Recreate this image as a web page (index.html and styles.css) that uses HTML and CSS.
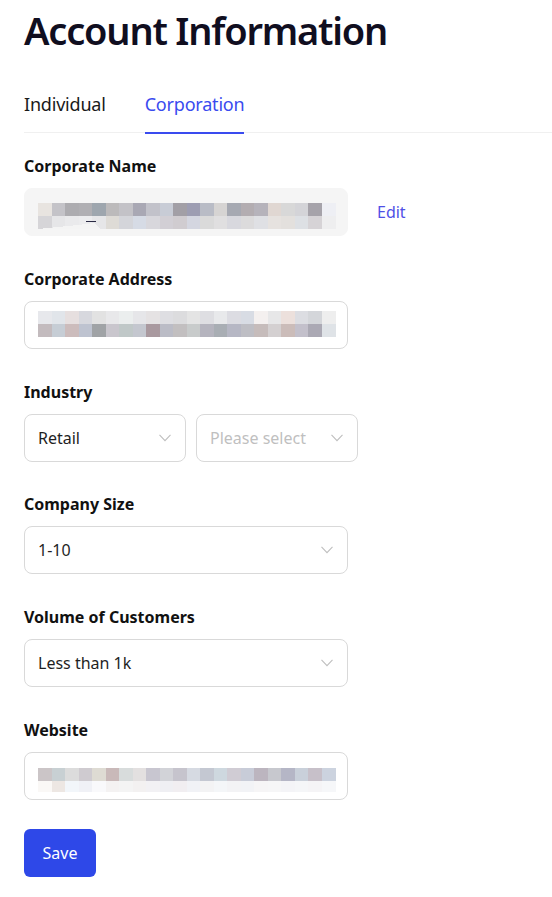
FILE: index.html
```html
<!DOCTYPE html>
<html lang="en">
<head>
<meta charset="utf-8">
<title>Account Information</title>
<link rel="stylesheet" href="styles.css">
</head>
<body>
<div class="page">
  <h1 class="title">Account Information</h1>
  <div class="tabs">
    <div class="tab">Individual</div>
    <div class="tab active">Corporation</div>
  </div>
  <form class="form">
    <div class="fields">
      <div class="field">
        <label class="label">Corporate Name</label>
        <div class="row">
          <div class="input disabled">
            <svg class="mosaic" width="300" height="46" viewBox="0 0 300 46" shape-rendering="crispEdges">
              <g transform="translate(0,14)">
                <rect x="0" width="14" height="13" fill="#e8e4e0"/><rect x="13.5" width="14" height="13" fill="#c4c3c8"/><rect x="27" width="14" height="13" fill="#adacb0"/><rect x="40.5" width="14" height="13" fill="#b0afb3"/><rect x="54" width="14" height="13" fill="#9ea6ae"/><rect x="67.5" width="14" height="13" fill="#bcbabb"/><rect x="81" width="14" height="13" fill="#c3c2c7"/><rect x="94.5" width="14" height="13" fill="#a9a8b4"/><rect x="108" width="14" height="13" fill="#c2c2ca"/><rect x="121.5" width="14" height="13" fill="#c8ccd6"/><rect x="135" width="14" height="13" fill="#a29fa6"/><rect x="148.5" width="14" height="13" fill="#9d9db2"/><rect x="162" width="14" height="13" fill="#b9bcc6"/><rect x="175.5" width="14" height="13" fill="#d6d4d3"/><rect x="189" width="14" height="13" fill="#a6a9b2"/><rect x="202.5" width="14" height="13" fill="#b3adb1"/><rect x="216" width="14" height="13" fill="#b6b3bb"/><rect x="229.5" width="14" height="13" fill="#e0d7d2"/><rect x="243" width="14" height="13" fill="#d8d8d8"/><rect x="256.5" width="14" height="13" fill="#d4d4d8"/><rect x="270" width="14" height="13" fill="#a6a3aa"/><rect x="283.5" width="14" height="13" fill="#eeeff4"/>
              </g>
              <g transform="translate(0,27)">
                <rect x="0" width="14" height="13" fill="#d6d5d8"/><rect x="13.5" width="14" height="13" fill="#e6e6e8"/><rect x="27" width="14" height="13" fill="#eaeaec"/><rect x="40.5" width="14" height="13" fill="#ececee"/><rect x="54" width="14" height="13" fill="#e6e6e8"/><rect x="67.5" width="14" height="13" fill="#dedbd6"/><rect x="81" width="14" height="13" fill="#d4d5da"/><rect x="94.5" width="14" height="13" fill="#d6dbe5"/><rect x="108" width="14" height="13" fill="#d8d7dc"/><rect x="121.5" width="14" height="13" fill="#d2cfd5"/><rect x="135" width="14" height="13" fill="#d0ccd0"/><rect x="148.5" width="14" height="13" fill="#d4d6e0"/><rect x="162" width="14" height="13" fill="#dadada"/><rect x="175.5" width="14" height="13" fill="#e0dfe0"/><rect x="189" width="14" height="13" fill="#d8d8de"/><rect x="202.5" width="14" height="13" fill="#dcdbdc"/><rect x="216" width="14" height="13" fill="#dfe0e4"/><rect x="229.5" width="14" height="13" fill="#e6e2df"/><rect x="243" width="14" height="13" fill="#e3e0dd"/><rect x="256.5" width="14" height="13" fill="#dde0e4"/><rect x="270" width="14" height="13" fill="#d6d3d6"/><rect x="283.5" width="14" height="13" fill="#eeeeef"/>
              </g>
              <path d="M0 40 L40 36 L56 34 L62 40 Z" fill="#f4f4f4"/>
              <path d="M48 33 L58 32" stroke="#2a2a44" stroke-width="1"/>
            </svg>
          </div>
          <a class="edit" href="#">Edit</a>
        </div>
      </div>

      <div class="field">
        <label class="label">Corporate Address</label>
        <div class="input">
          <svg class="mosaic" width="300" height="46" viewBox="0 0 300 46" shape-rendering="crispEdges">
            <g transform="translate(0,9)">
              <rect x="0" width="14" height="13" fill="#e7e8ec"/><rect x="13.5" width="14" height="13" fill="#e1e5ea"/><rect x="27" width="14" height="13" fill="#e6dfdf"/><rect x="40.5" width="14" height="13" fill="#d7d8de"/><rect x="54" width="14" height="13" fill="#e2e2e2"/><rect x="67.5" width="14" height="13" fill="#e8e8ea"/><rect x="81" width="14" height="13" fill="#ebeeee"/><rect x="94.5" width="14" height="13" fill="#e6e6e9"/><rect x="108" width="14" height="13" fill="#e5e2e3"/><rect x="121.5" width="14" height="13" fill="#dedee2"/><rect x="135" width="14" height="13" fill="#dcdcde"/><rect x="148.5" width="14" height="13" fill="#e4e4e4"/><rect x="162" width="14" height="13" fill="#dedee2"/><rect x="175.5" width="14" height="13" fill="#e8e9eb"/><rect x="189" width="14" height="13" fill="#dcdce2"/><rect x="202.5" width="14" height="13" fill="#d8dce4"/><rect x="216" width="14" height="13" fill="#f4f0ef"/><rect x="229.5" width="14" height="13" fill="#e7e7e8"/><rect x="243" width="14" height="13" fill="#ece0dc"/><rect x="256.5" width="14" height="13" fill="#dcdde2"/><rect x="270" width="14" height="13" fill="#d4d6da"/><rect x="283.5" width="14" height="13" fill="#eeeeee"/>
            </g>
            <g transform="translate(0,22)">
              <rect x="0" width="14" height="13" fill="#c3bbbe"/><rect x="13.5" width="14" height="13" fill="#c6cdd5"/><rect x="27" width="14" height="13" fill="#ccbcbc"/><rect x="40.5" width="14" height="13" fill="#bec3d0"/><rect x="54" width="14" height="13" fill="#a0a3a6"/><rect x="67.5" width="14" height="13" fill="#c9c6cd"/><rect x="81" width="14" height="13" fill="#c0c8c8"/><rect x="94.5" width="14" height="13" fill="#c4c7cf"/><rect x="108" width="14" height="13" fill="#a9999f"/><rect x="121.5" width="14" height="13" fill="#bbbcc6"/><rect x="135" width="14" height="13" fill="#c2bfc0"/><rect x="148.5" width="14" height="13" fill="#c8cbcb"/><rect x="162" width="14" height="13" fill="#b5b4be"/><rect x="175.5" width="14" height="13" fill="#a9aeb4"/><rect x="189" width="14" height="13" fill="#b6b7c4"/><rect x="202.5" width="14" height="13" fill="#bebec4"/><rect x="216" width="14" height="13" fill="#c6bcbb"/><rect x="229.5" width="14" height="13" fill="#d4d0d1"/><rect x="243" width="14" height="13" fill="#cbbcb9"/><rect x="256.5" width="14" height="13" fill="#c3c0cb"/><rect x="270" width="14" height="13" fill="#aba9b4"/><rect x="283.5" width="14" height="13" fill="#dfe3e7"/>
            </g>
          </svg>
        </div>
      </div>

      <div class="field">
        <label class="label">Industry</label>
        <div class="row pair">
          <div class="input select">
            <span>Retail</span>
            <svg class="chevron" width="12" height="8" viewBox="0 0 12 8"><path d="M0.5 0.8 L6 6.6 L11.5 0.8" fill="none" stroke="#bfbfbf" stroke-width="1.1"/></svg>
          </div>
          <div class="input select">
            <span class="placeholder">Please select</span>
            <svg class="chevron" width="12" height="8" viewBox="0 0 12 8"><path d="M0.5 0.8 L6 6.6 L11.5 0.8" fill="none" stroke="#bfbfbf" stroke-width="1.1"/></svg>
          </div>
        </div>
      </div>

      <div class="field">
        <label class="label">Company Size</label>
        <div class="input select">
          <span>1-10</span>
          <svg class="chevron" width="12" height="8" viewBox="0 0 12 8"><path d="M0.5 0.8 L6 6.6 L11.5 0.8" fill="none" stroke="#bfbfbf" stroke-width="1.1"/></svg>
        </div>
      </div>

      <div class="field">
        <label class="label">Volume of Customers</label>
        <div class="input select">
          <span>Less than 1k</span>
          <svg class="chevron" width="12" height="8" viewBox="0 0 12 8"><path d="M0.5 0.8 L6 6.6 L11.5 0.8" fill="none" stroke="#bfbfbf" stroke-width="1.1"/></svg>
        </div>
      </div>

      <div class="field">
        <label class="label">Website</label>
        <div class="input">
          <svg class="mosaic" width="300" height="46" viewBox="0 0 300 46" shape-rendering="crispEdges">
            <g transform="translate(0,15)">
              <rect x="0" width="14" height="13" fill="#cbc5c7"/><rect x="13.5" width="14" height="13" fill="#c8d0d3"/><rect x="27" width="14" height="13" fill="#dcdcdc"/><rect x="40.5" width="14" height="13" fill="#cfcbd0"/><rect x="54" width="14" height="13" fill="#dedbd3"/><rect x="67.5" width="14" height="13" fill="#c9b9b9"/><rect x="81" width="14" height="13" fill="#d8dcdc"/><rect x="94.5" width="14" height="13" fill="#e3e0e0"/><rect x="108" width="14" height="13" fill="#c8c6d0"/><rect x="121.5" width="14" height="13" fill="#d2d3d8"/><rect x="135" width="14" height="13" fill="#c6c4cd"/><rect x="148.5" width="14" height="13" fill="#d6dae2"/><rect x="162" width="14" height="13" fill="#c4c8d2"/><rect x="175.5" width="14" height="13" fill="#ced8df"/><rect x="189" width="14" height="13" fill="#d0ccd4"/><rect x="202.5" width="14" height="13" fill="#c8ccd8"/><rect x="216" width="14" height="13" fill="#bcb5bf"/><rect x="229.5" width="14" height="13" fill="#c7c8ce"/><rect x="243" width="14" height="13" fill="#b5b6c6"/><rect x="256.5" width="14" height="13" fill="#c9d0da"/><rect x="270" width="14" height="13" fill="#c7c0c9"/><rect x="283.5" width="14" height="13" fill="#ccd3df"/>
            </g>
            <g transform="translate(0,28)">
              <rect x="0" width="14" height="11" fill="#faf8f6"/><rect x="13.5" width="14" height="11" fill="#ede7e3"/><rect x="27" width="14" height="11" fill="#f2f6fa"/><rect x="40.5" width="14" height="11" fill="#f0f1f6"/><rect x="54" width="14" height="11" fill="#f9f9fb"/><rect x="67.5" width="14" height="11" fill="#f4f2f2"/><rect x="81" width="14" height="11" fill="#f4f4f4"/><rect x="94.5" width="14" height="11" fill="#f3f1f1"/><rect x="108" width="14" height="11" fill="#f2f1f4"/><rect x="121.5" width="14" height="11" fill="#efeff3"/><rect x="135" width="14" height="11" fill="#f1eef1"/><rect x="148.5" width="14" height="11" fill="#f1f2f6"/><rect x="162" width="14" height="11" fill="#f3f3f4"/><rect x="175.5" width="14" height="11" fill="#f4f6f8"/><rect x="189" width="14" height="11" fill="#f3f3f5"/><rect x="202.5" width="14" height="11" fill="#f2f3f6"/><rect x="216" width="14" height="11" fill="#f6f5f6"/><rect x="229.5" width="14" height="11" fill="#f6f6f7"/><rect x="243" width="14" height="11" fill="#f4f4f7"/><rect x="256.5" width="14" height="11" fill="#f5f6f8"/><rect x="270" width="14" height="11" fill="#f5f4f6"/><rect x="283.5" width="14" height="11" fill="#f6f7f9"/>
            </g>
          </svg>
        </div>
      </div>
    </div>
    <div class="actions">
      <button type="button" class="btn-primary">Save</button>
    </div>
  </form>
</div>
</body>
</html>
```

FILE: styles.css
```css
* {
  box-sizing: border-box;
}

body {
  margin: 0;
  background: #ffffff;
  font-family: "Noto Sans", "Segoe UI", "Liberation Sans", sans-serif;
  color: #1f1f1f;
}

.page {
  padding: 6px 0 0 24px;
}

.title {
  margin: 0;
  font-size: 38px;
  line-height: 48px;
  font-weight: 600;
  letter-spacing: -1.2px;
  color: #100e1f;
}

.tabs {
  display: flex;
  gap: 39px;
  margin-top: 23px;
  border-bottom: 1px solid #f0f0f0;
}

.tab {
  position: relative;
  padding: 13px 0 14px;
  font-size: 18px;
  line-height: 28px;
  letter-spacing: -0.2px;
  color: #1a1a1a;
}

.tab.active {
  color: #3a4bef;
}

.tab.active::after {
  content: "";
  position: absolute;
  left: 0;
  right: 0;
  bottom: -2px;
  height: 2px;
  background: #3a4bef;
}

.form {
  margin-top: 22px;
  display: flex;
  flex-direction: column;
}

.fields {
  display: flex;
  flex-direction: column;
  gap: 31.8px;
}

.field {
  display: flex;
  flex-direction: column;
}

.label {
  display: block;
  font-size: 16px;
  line-height: 22px;
  font-weight: 700;
  color: #111111;
  margin-bottom: 11px;
}

.row {
  display: flex;
  align-items: center;
}

.row.pair {
  gap: 10px;
}

.input {
  width: 324px;
  height: 48px;
  border: 1px solid #d9d9d9;
  border-radius: 8px;
  padding: 0 14px 0 13px;
  display: flex;
  align-items: center;
  font-size: 16px;
  color: #1f1f1f;
  background: #ffffff;
  overflow: hidden;
}

.input.disabled {
  background: #f5f5f5;
  border-color: #f5f5f5;
}

.pair .input {
  width: 162px;
}

.select {
  justify-content: space-between;
}

.placeholder {
  color: #bfbfbf;
}

.chevron {
  flex: none;
  display: block;
}

.mosaic {
  flex: none;
  display: block;
}

.edit {
  margin-left: 29px;
  font-size: 16px;
  color: #5050e6;
  text-decoration: none;
}

.actions {
  margin-top: 29px;
}

.btn-primary {
  width: 72px;
  height: 48px;
  border: none;
  border-radius: 6px;
  background: #2e48e8;
  color: #ffffff;
  font-family: inherit;
  font-size: 16px;
  padding: 0;
}
```
